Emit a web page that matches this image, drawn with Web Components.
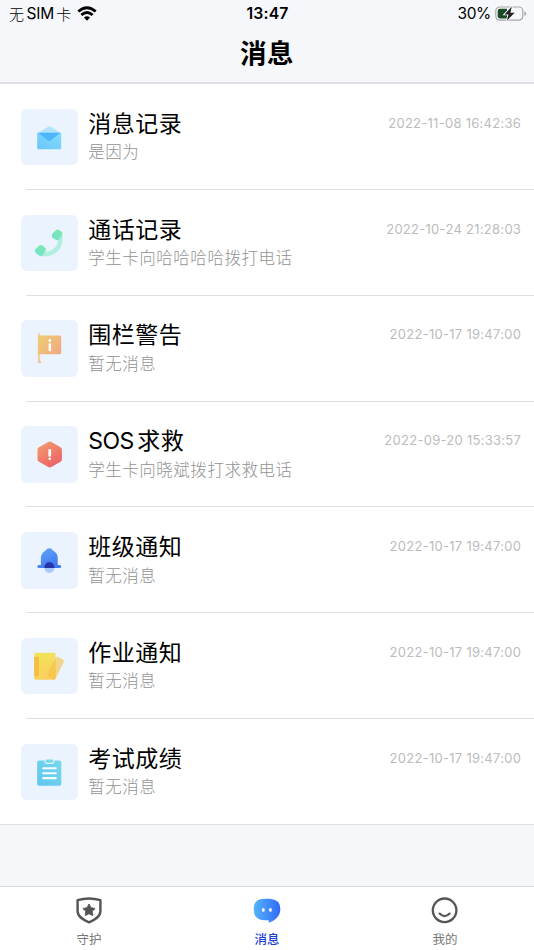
<!DOCTYPE html>
<html lang="zh-CN">
<head>
<meta charset="utf-8">
<title>消息</title>
<style>
html,body{margin:0;height:100%}
body{font-family:Inter,"Noto Sans CJK SC",sans-serif;background:#f5f7fb;color:#000;overflow:hidden}
</style>
</head>
<body>
<message-app></message-app>
<script>
const define = (name, html) => customElements.define(name, class extends HTMLElement {
  connectedCallback() {
    if (this.shadowRoot) return;
    this.attachShadow({mode: 'open'}).innerHTML = typeof html === 'function' ? html(this) : html;
  }
});

const icons = {
  mail: `<defs><linearGradient id="a" x1="1" y1="0" x2="0" y2="1"><stop stop-color="#86dcfa"/><stop offset="1" stop-color="#69c5fc"/></linearGradient></defs>
    <path d="M16.3 24.2 27.3 17.7Q28.5 17 29.7 17.7L40.2 24.2V27H16.3Z" fill="#b2e3fb"/>
    <rect x="16.2" y="23.8" width="24" height="16.4" rx="1.3" fill="url(#a)"/>
    <path d="M17 23.8H39.5L29.6 31.5Q28.4 32.3 27.2 31.5Z" fill="#4db5fb"/>`,
  phone: `<defs><linearGradient id="a" x1="1" y1="0" x2="0" y2="1"><stop stop-color="#80eba7"/><stop offset="1" stop-color="#70dfd2"/></linearGradient></defs>
    <path d="M39.3 20C40.6 32.5 33.5 39.5 21.5 39.3" fill="none" stroke="#b0eee0" stroke-width="4.6" stroke-linecap="round"/>
    <path d="M34.6 15.6Q36.2 14 38 15L40.6 16.8Q42 18 41 19.8L38.5 24Q37.3 25.6 35.6 25L32 23.2Q30.6 22.4 30.8 20.7Q31 19.2 32 18.1Z" fill="url(#a)"/>
    <path d="M17.8 31.1Q20 29.2 21.9 30.7L24.5 33.1Q25.5 34.2 24.5 35.8L21.8 40Q20.4 41.8 18.7 40.8L15.2 38.2Q13.2 36.8 14.3 34.6Q15.5 33 17.8 31.1Z" fill="url(#a)"/>`,
  flag: `<defs><linearGradient id="a" x2="1" y2=".65"><stop stop-color="#efcf73"/><stop offset="1" stop-color="#f1ab82"/></linearGradient></defs>
    <rect x="16.8" y="13" width="2.4" height="29" rx="1.2" fill="#f4cfa6"/><path d="M16.8 41H20V43H16.5Z" fill="#f4c2a5"/>
    <path d="M17 15.6H39Q40.2 15.6 40.2 16.8V33Q40.2 34.2 39 34.2H17Z" fill="url(#a)"/>
    <circle cx="28.8" cy="20.5" r="1.4" fill="#fff"/><rect x="27.6" y="23.2" width="2.4" height="8" rx=".7" fill="#fff"/>`,
  alert: `<defs><linearGradient id="a" x2=".6" y2="1"><stop stop-color="#f2a06e"/><stop offset="1" stop-color="#ee6467"/></linearGradient></defs>
    <path d="M27.2 15.9Q28.8 15 30.4 15.9L39.5 21.2Q40.9 22 40.9 23.7V33.3Q40.9 35 39.5 35.8L30.4 41Q28.8 41.9 27.2 41L18 35.8Q16.5 35 16.5 33.3V23.7Q16.5 22 18 21.2Z" fill="url(#a)"/>
    <rect x="27.4" y="23.2" width="2.7" height="7.3" rx=".6" fill="#fff"/><circle cx="28.75" cy="32.7" r="1.3" fill="#fff"/>`,
  bell: `<defs><linearGradient id="a" x2=".6" y2="1"><stop stop-color="#65a7fb"/><stop offset="1" stop-color="#3f77f2"/></linearGradient></defs>
    <path d="M25 18.2Q25.7 16.2 28.3 16.2T31.6 18.2Q36.7 20.6 36.7 26.2V33H38.6Q40.2 33 40.2 34.5T38.6 36.1H18Q16.3 36.1 16.3 34.5T18 33H19.9V26.2Q20 20.6 25 18.2Z" fill="url(#a)"/>
    <path d="M23.4 36A5 5 0 0 0 33.4 36Z" fill="#a9c8fb"/><path d="M23.5 36.1A5 5 0 1 1 33.3 36.1Z" fill="#2735a4"/>`,
  book: `<defs><linearGradient id="a" x2=".3" y2="1"><stop stop-color="#efe659"/><stop offset="1" stop-color="#fbcf5e"/></linearGradient></defs>
    <rect x="13.2" y="14.8" width="21.4" height="27" rx="1.7" fill="url(#a)"/><path d="M13.2 18.8H18V38.2H13.2Z" fill="#f6bd43"/>
    <path d="M35.4 19.3Q36.2 18.4 37.4 19L42.4 22.1Q43.4 22.8 42.8 24L34.8 40.2Q33.7 42 31.9 41.2L27.2 38.4Q25.7 37.3 26.8 35.5Z" fill="#f3cb66" fill-opacity=".77"/>
    <path d="M34.6 20.5V40.5Q33.2 41.8 31.6 41L27.2 38.4Q25.7 37.3 26.8 35.5Z" fill="#f8c343" fill-opacity=".65"/>`,
  list: `<defs><linearGradient id="a" x1="1" x2="0" y2="1"><stop stop-color="#77d8ec"/><stop offset="1" stop-color="#60c5f1"/></linearGradient></defs>
    <path d="M18.2 16.6H23.4Q23.4 19.9 26 19.9H31Q33.4 19.9 33.4 16.6H38.6Q40.3 16.6 40.3 18.3V40Q40.3 41.7 38.6 41.7H17.9Q16.2 41.7 16.2 40V18.3Q16.2 16.6 18.2 16.6Z" fill="url(#a)"/>
    <rect x="24.6" y="15.4" width="7.6" height="3.3" rx="1" fill="#77d7ec"/>
    <path d="M22.2 24.2H34.8M22.2 29.3H34.8M22.2 34.1H34.8" stroke="#f4fcff" stroke-width="2.1" stroke-linecap="round"/>`
};

define('status-bar', `<style>
  :host{display:grid;grid-template-columns:1fr auto 1fr;align-items:center;height:28px;box-sizing:border-box;padding:0 7px 0 9px;font-size:15.5px;line-height:22px}
  div{display:flex;align-items:center}.r{justify-content:flex-end}b{font-weight:600;font-size:15.8px;letter-spacing:.15px;margin-right:1px}
  .sim{margin:0 2px 0 2.5px;letter-spacing:-.15px}.cjk{font-family:"Noto Sans CJK SC",sans-serif;font-size:15px;font-weight:300}
  .pct{letter-spacing:-.35px}
  .wifi{margin-left:6px}.bat{margin-left:4px}svg{display:block}
  </style><div><span class="cjk">无</span><span class="sim">SIM</span><span class="cjk">卡</span>
  <svg class="wifi" width="20" height="16" viewBox="0 0 20 16"><g fill="none" stroke="#000" stroke-width="2.9"><path d="M1.3 5.5Q10-2.2 18.7 5.5M4.4 9Q10 4 15.6 9"/></g><path d="M6.9 11.6Q10 8.8 13.1 11.6L10 14.8Z"/></svg></div>
  <b>13:47</b><div class="r"><span class="pct">30%</span>
  <svg class="bat" width="32" height="16" viewBox="0 0 32 16"><rect x=".8" y="1" width="27" height="13.2" rx="4" fill="none" stroke="#a6a7aa" stroke-width="1.2"/><path d="M29.4 5.2Q31.2 6 31.2 7.6T29.4 10Z" fill="#a6a7aa"/><path d="M5 2.8H12V12.4H5Q2.7 12.4 2.7 10.3V4.9Q2.7 2.8 5 2.8Z" fill="#174b24"/><path d="M16.8.6 9.5 8.4H13.5L11.8 14.8 19.6 6.7H15.4Z" fill="#222" stroke="#f5f7fb" stroke-width="1.8" paint-order="stroke"/></svg></div>`);

define('page-header', `<style>
  :host{display:flex;flex-direction:column;height:84px;box-sizing:border-box;border-bottom:2px solid #dfe1e3}
  h1{margin:0;text-align:center;font:700 26.5px/48px "Noto Sans CJK SC",sans-serif;letter-spacing:.5px}
  </style><status-bar></status-bar><h1><slot></slot></h1>`);

define('message-icon', e => `<style>:host{display:block;width:57px;height:56.7px;border-radius:6px;background:#ebf4fe}svg{display:block}</style>
  <svg width="57" height="57" viewBox="0 0 57 57">${icons[e.getAttribute('name')]}</svg>`);

define('message-row', e => `<style>
  :host{display:flex;height:105.8px;box-sizing:border-box;padding:24.5px 13px 0 21px;position:relative}
  :host::after{content:"";position:absolute;left:26px;right:0;bottom:0;height:1px;background:#dfe0e1}
  :host(:last-child)::after{left:0}
  .body{flex:1;margin-left:10.2px;min-width:0}
  .top{display:flex;justify-content:space-between}
  h2{margin:0;font-weight:400;font-size:23px;line-height:30px;letter-spacing:.5px;white-space:pre}
  time{font-size:13px;line-height:29px;letter-spacing:.28px;margin-right:-.2px;color:#bcbcbc}
  p{margin:.6px 0 0;font-size:16.5px;line-height:26px;letter-spacing:.53px;color:#929292;font-weight:300}
  </style><message-icon name="${e.getAttribute('icon')}"></message-icon>
  <div class="body"><div class="top"><h2><slot name="title"></slot></h2><time><slot name="time"></slot></time></div><p><slot></slot></p></div>`);

define('message-list', `<style>:host{display:block;background:#fff;padding-top:.3px}</style><slot></slot>`);

const tabIcons = {
  guard: `<path d="M3.2 4.3Q15 .9 26.8 4.3V15.5C26.8 21.6 21.4 24.5 15 27.2C8.6 24.5 3.2 21.6 3.2 15.5Z" fill="none" stroke="#555" stroke-width="2.5" stroke-linejoin="round"/><path d="m15 8.3 2 3.9 4.3.7-3.1 3.1.7 4.3-3.9-2-3.9 2 .7-4.3-3.1-3.1 4.3-.7Z" fill="#555" stroke="#555" stroke-width="1" stroke-linejoin="round"/>`,
  chat: `<defs><linearGradient id="c"><stop stop-color="#54b5fb"/><stop offset="1" stop-color="#3269f7"/></linearGradient></defs><path d="M12 2.9H18Q28.8 3.5 28.8 13.8C28.8 20.6 23.5 25.3 17.9 27.5Q16.8 27.9 16.8 26.6V25.2H12Q1.2 24.7 1.2 13.8T12 2.9Z" fill="url(#c)"/><ellipse cx="11.2" cy="14.4" rx="1.5" ry="1.9" fill="#fff"/><ellipse cx="18.5" cy="14.4" rx="1.5" ry="1.9" fill="#fff"/>`,
  me: `<circle cx="14.6" cy="14.8" r="12.2" fill="none" stroke="#555" stroke-width="2.4"/><path d="M9.4 18.2Q14.6 23.6 19.8 18.2" fill="none" stroke="#555" stroke-width="2.3" stroke-linecap="round"/>`
};
define('tab-item', e => `<style>
  :host{display:flex;flex-direction:column;align-items:center;flex:1;padding-top:9px;color:#777;font-size:12.5px;line-height:20px}
  :host([active]){color:#1b3fd8;font-weight:500}svg{display:block;margin-bottom:5px}
  </style><svg width="30" height="30" viewBox="0 0 30 30">${tabIcons[e.getAttribute('icon')]}</svg><span><slot></slot></span>`);

define('tab-bar', `<style>:host{display:flex;height:64px;box-sizing:border-box;background:#fff;border-top:1px solid #d5d7da}</style><slot></slot>`);

const rows = [
  ['mail','消息记录','2022-11-08 16:42:36','是因为'],
  ['phone','通话记录','2022-10-24 21:28:03','学生卡向哈哈哈哈拨打电话'],
  ['flag','围栏警告','2022-10-17 19:47:00','暂无消息'],
  ['alert','<span style="letter-spacing:-.5px;margin-right:3.5px">SOS</span>求救','2022-09-20 15:33:57','学生卡向晓斌拨打求救电话'],
  ['bell','班级通知','2022-10-17 19:47:00','暂无消息'],
  ['book','作业通知','2022-10-17 19:47:00','暂无消息'],
  ['list','考试成绩','2022-10-17 19:47:00','暂无消息']
];
define('message-app', `<style>:host{display:flex;flex-direction:column;height:950px}tab-bar{margin-top:auto}</style>
  <page-header>消息</page-header>
  <message-list>${rows.map(([i,t,d,s]) => `<message-row icon="${i}"><span slot="title">${t}</span><span slot="time">${d}</span>${s}</message-row>`).join('')}</message-list>
  <tab-bar><tab-item icon="guard">守护</tab-item><tab-item icon="chat" active>消息</tab-item><tab-item icon="me">我的</tab-item></tab-bar>`);
</script>
</body>
</html>
